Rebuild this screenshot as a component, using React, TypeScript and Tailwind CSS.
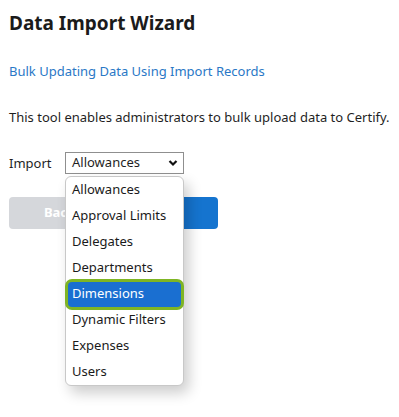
import React from "react";

const options = [
  "Allowances",
  "Approval Limits",
  "Delegates",
  "Departments",
  "Dimensions",
  "Dynamic Filters",
  "Expenses",
  "Users",
];

const App = () => {
  const selected = "Dimensions";

  return (
    <div
      className="min-h-screen bg-white pl-[9px] pt-[7px] text-[#1f1f1f]"
      style={{ fontFamily: '"Noto Sans", sans-serif' }}
    >
      <h1 className="mt-[2px] text-[19px] leading-[28px] font-bold text-[#1b1b1b]">Data Import Wizard</h1>

      <a href="#" className="mt-[24px] block text-[13px] leading-[20px] text-[#2a78c6]">
        Bulk Updating Data Using Import Records
      </a>

      <p className="mt-[26px] text-[13px] leading-[20px] text-[#1f1f1f]">
        This tool enables administrators to bulk upload data to Certify.
      </p>

      {/* Import selector */}
      <div className="mt-[25px] flex items-center">
        <label className="w-[56px] text-[13px] leading-[20px]">Import</label>
        <div className="relative">
          <div className="flex h-[22px] w-[119px] items-center justify-between border border-[#8f8f8f] bg-white pl-[6px] pr-[5px] text-[13px]">
            <span>Allowances</span>
            <svg width="10" height="8" viewBox="0 0 10 8">
              <path d="M1.5 2 L5 5.5 L8.5 2" fill="none" stroke="#111" strokeWidth="2.2" />
            </svg>
          </div>

          {/* open list */}
          <ul className="absolute left-0 top-[24px] z-10 w-[119px] rounded-[6px] border border-[#c8c8c8] bg-white shadow-[5px_7px_14px_rgba(0,0,0,0.2)]">
            {options.map((opt) => (
              <li key={opt} className="flex h-[26px] items-center px-[2px]">
                {opt === selected ? (
                  <div className="flex h-[25px] w-full items-center rounded-[4px] bg-[#1a6fd1] pl-[4px] text-[13px] text-white ring-[3px] ring-[#7fb524]">
                    {opt}
                  </div>
                ) : (
                  <span className="pl-[4px] text-[13px] text-[#1a1a1a]">{opt}</span>
                )}
              </li>
            ))}
          </ul>
        </div>
      </div>

      {/* Buttons (the list covers most of them) */}
      <div className="mt-[23px] flex gap-[8px]">
        <button className="h-[32px] w-[101px] rounded-[4px] bg-[#d5d7db] text-[13px] font-bold text-white">
          Back
        </button>
        <button aria-label="Next" className="h-[32px] w-[100px] rounded-[4px] bg-[#1574cf]" />
      </div>
    </div>
  );
};

export default App;
